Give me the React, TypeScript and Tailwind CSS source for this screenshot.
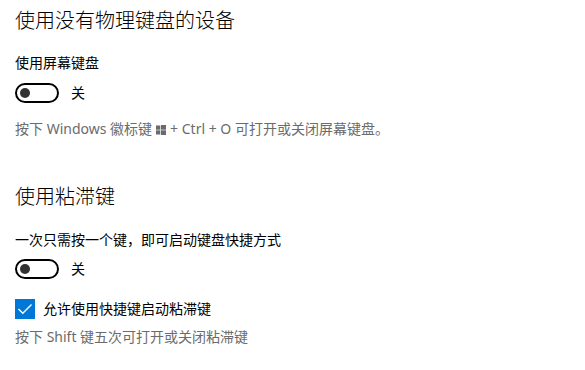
import React from "react";

const font = { fontFamily: '"Noto Sans", "Noto Sans CJK SC", sans-serif' };

function Toggle() {
  return (
    <div className="flex items-center h-[20px]">
      <div className="w-[44px] h-[20px] rounded-full border-2 border-black flex items-center pl-[3px] box-border">
        <div className="w-[10px] h-[10px] rounded-full bg-[#333333]" />
      </div>
      <span className="ml-[12px] text-[14px] leading-[20px] text-black">关</span>
    </div>
  );
}

function WinLogo() {
  return (
    <svg width="10" height="10" viewBox="0 0 10 10" className="inline-block mx-[4px] align-[-1px]">
      <rect x="0" y="0.5" width="4.3" height="4.2" fill="#6b6b6b" />
      <rect x="5" y="0" width="5" height="4.7" fill="#6b6b6b" />
      <rect x="0" y="5.3" width="4.3" height="4.2" fill="#6b6b6b" />
      <rect x="5" y="5.3" width="5" height="4.7" fill="#6b6b6b" />
    </svg>
  );
}

export default function App() {
  return (
    <div className="w-[585px] h-[370px] bg-white overflow-hidden pl-[15px] pt-[7px]" style={font}>
      <div className="text-[20px] leading-[28px] font-light text-black">使用没有物理键盘的设备</div>
      <div className="mt-[18px] text-[14px] leading-[20px] text-black">使用屏幕键盘</div>
      <div className="mt-[10px]">
        <Toggle />
      </div>
      <div className="mt-[16px] text-[14px] leading-[20px] text-[#6b6b6b] whitespace-nowrap">
        按下 Windows 徽标键<WinLogo />+ Ctrl + O 可打开或关闭屏幕键盘。
      </div>

      <div className="mt-[44px] text-[20px] leading-[28px] font-light text-black">使用粘滞键</div>
      <div className="mt-[19px] text-[14px] leading-[20px] text-black">一次只需按一个键，即可启动键盘快捷方式</div>
      <div className="mt-[9px]">
        <Toggle />
      </div>
      <div className="mt-[20px] flex items-center h-[20px]">
        <div className="w-[20px] h-[20px] bg-[#0078d7] flex items-center justify-center">
          <svg width="16" height="16" viewBox="0 0 16 16">
            <path d="M1.5 8 L5.8 12.3 L14.5 3.6" fill="none" stroke="white" strokeWidth="1.4" />
          </svg>
        </div>
        <span className="ml-[8px] text-[14px] leading-[20px] text-black">允许使用快捷键启动粘滞键</span>
      </div>
      <div className="mt-[8px] text-[14px] leading-[20px] text-[#6b6b6b]">按下 Shift 键五次可打开或关闭粘滞键</div>
    </div>
  );
}
